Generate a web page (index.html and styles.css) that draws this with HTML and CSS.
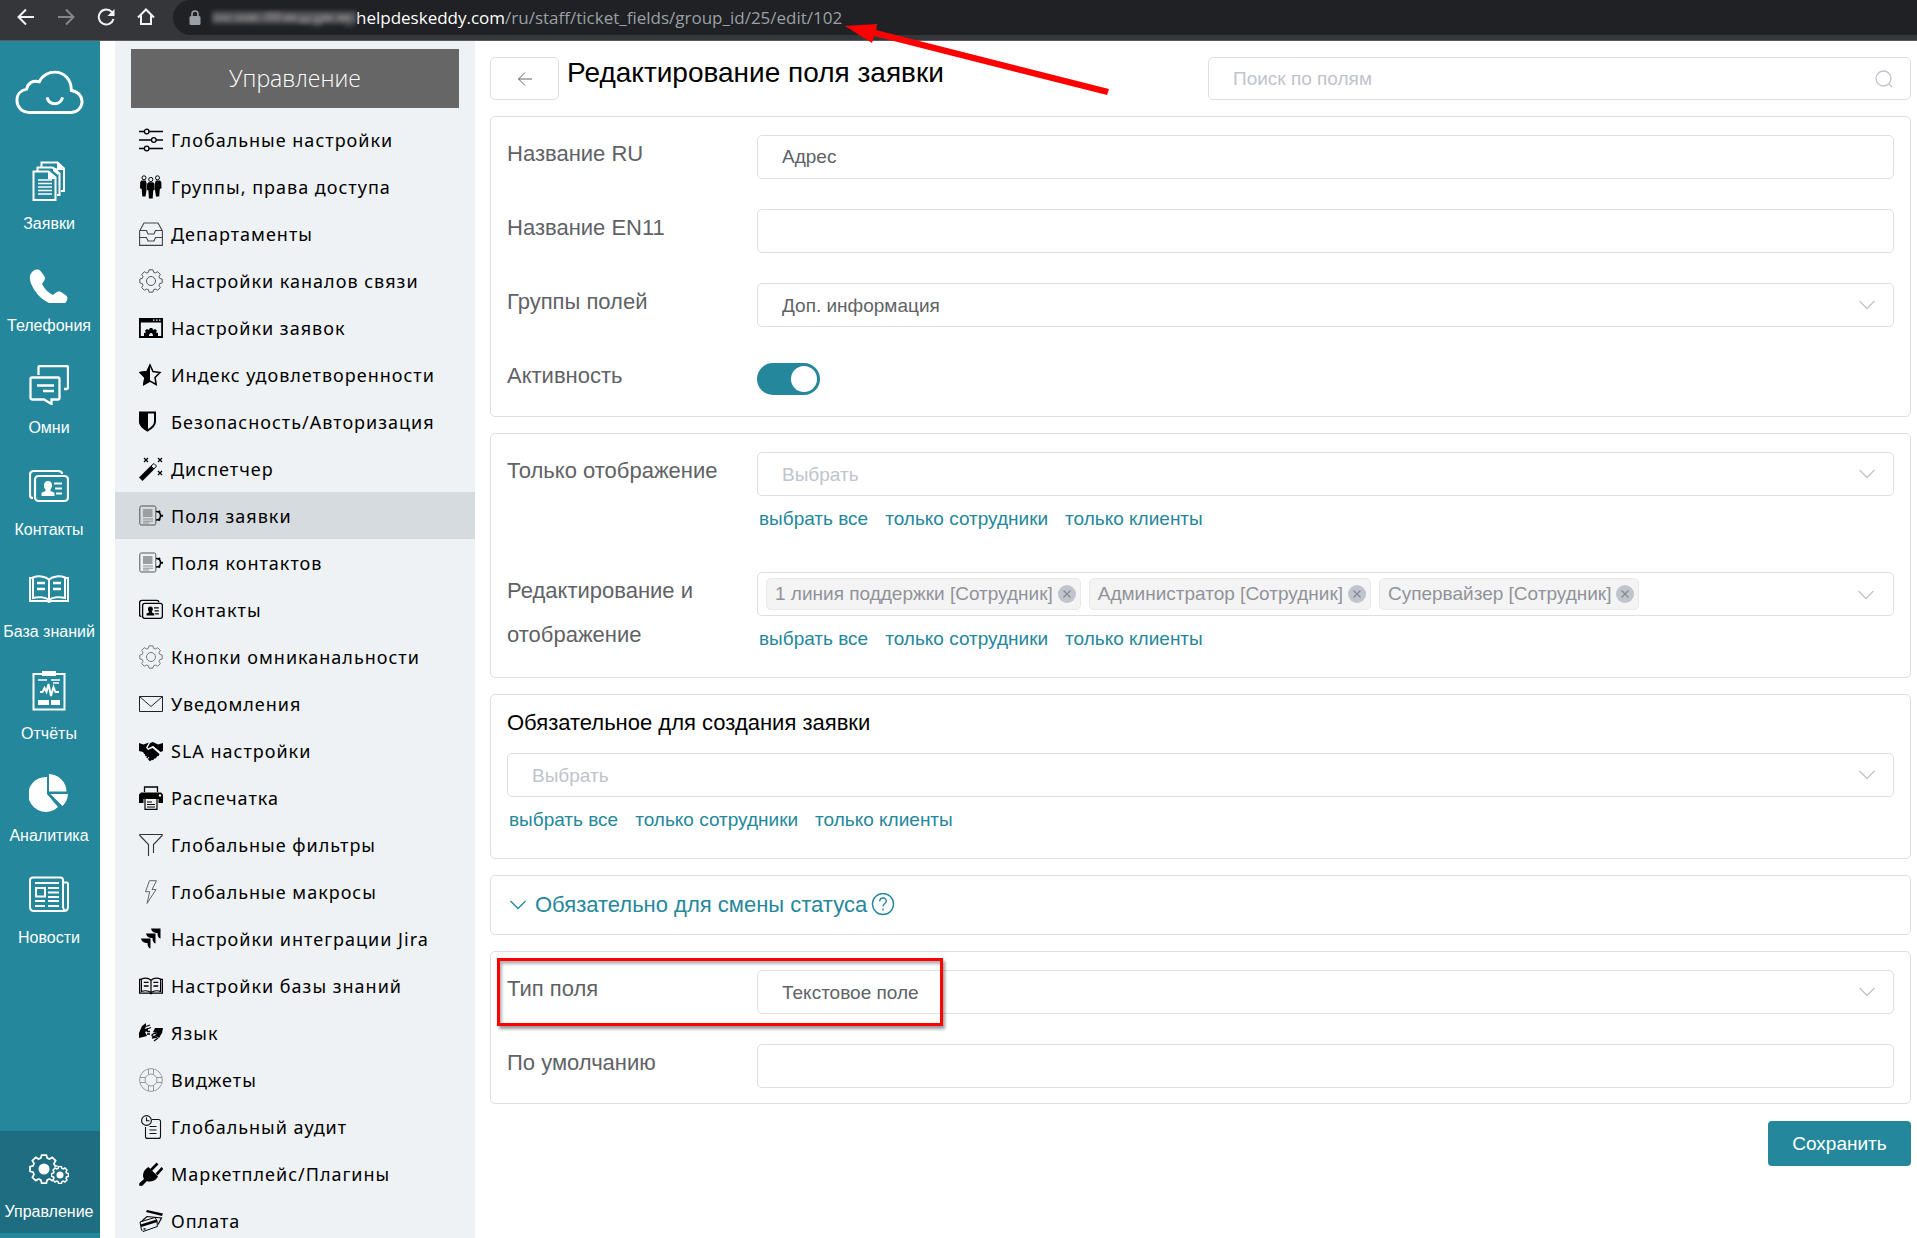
FILE: index.html
```html
<!DOCTYPE html>
<html lang="ru">
<head>
<meta charset="utf-8">
<title>Редактирование поля заявки</title>
<link rel="stylesheet" href="styles.css">
</head>
<body>
<svg class="defs" aria-hidden="true">
  <symbol id="gear" viewBox="0 0 24 24"><path d="M9.4 3.3 10.1.8h3.8l.7 2.5 1.7.7 2.3-1.3 2.7 2.7L20 7.7l.7 1.7 2.5.7v3.8l-2.5.7-.7 1.7 1.3 2.3-2.7 2.7-2.3-1.3-1.7.7-.7 2.5h-3.8l-.7-2.5-1.7-.7-2.3 1.3-2.7-2.7L4 16.3l-.7-1.7-2.5-.7v-3.8l2.5-.7L4 7.7 2.7 5.4l2.7-2.7L7.7 4Z"/></symbol>
  <symbol id="chevron" viewBox="0 0 18 18"><path d="M1.500 5 9 12.500l7.500-7.500" fill="none" stroke="currentColor" stroke-width="1.300"/></symbol>
  <symbol id="cross" viewBox="0 0 18 18"><circle cx="9" cy="9" r="9" fill="#c0c4cc"/><path d="m5.500 5.500 7 7m0-7-7 7" stroke="#85888e" stroke-width="1.200"/></symbol>
  <symbol id="fields" viewBox="0 0 24 24"><rect x=".8" y="2" width="16" height="19" rx="1.500" fill="none" stroke="#555"/><path d="M4 5h9.500v8H4z" fill="#9b9fa2"/><path d="M4 15h10M4 17.200h10M4 19h6" stroke="#8b8f92"/><path d="M17 7.500c3 0 4.500 2 4.500 4.200S20 16 17 16" fill="none" stroke="#000" stroke-width="1.500"/><path d="m19.500 7 1.500 1.500M22 11.700h2M19.500 16.600 21 15" stroke="#000" stroke-width="2"/></symbol>
  <symbol id="cards" viewBox="0 0 40 40"><g fill="none" stroke="currentColor" stroke-width="2.200"><path d="M4 31c-2 0-3-1-3-3V8c0-2.500 1-4 4-4h24c3 0 4 1.500 4 3"/><rect x="6" y="9" width="33" height="25" rx="3.500"/></g><path d="M19 14c3 0 4.300 2 4 5-.2 1.600-.8 2.600-1.500 3.500v1.500l4 1.700V29h-13v-3.300l4-1.700v-1.500C15.600 21.500 15 20.500 15 19c-.2-3 1-5 4-5Z" fill="currentColor"/><path d="M25 16.500h8M26 21.500h7M27 26.500h6" stroke="currentColor" stroke-width="2.200"/></symbol>
  <symbol id="book" viewBox="0 0 40 40"><g fill="none" stroke="currentColor" stroke-width="2"><path d="M4 9H1v23h17l2 1 2-1h17V9h-3"/><path d="M20 10.500C16 7 9 6.500 4 8.500V29c5-1.500 12-1 16 2 4-3 11-3.500 16-2V8.500c-5-2-12-1.500-16 2Zm0 0V31"/></g><path d="M8 14h8M8 20h8M24 14h8M24 20h8" stroke="currentColor" stroke-width="2.300"/></symbol>
</svg>

<header class="browser">
  <nav class="browser-nav" aria-label="Навигация браузера">
    <button class="nav-btn" aria-label="Назад"><svg viewBox="0 0 18 18"><path d="M17 9H2M9 1.500 1.500 9 9 16.500"/></svg></button>
    <button class="nav-btn nav-btn-off" aria-label="Вперёд"><svg viewBox="0 0 18 18"><path d="M1 9h15M9 1.500 16.500 9 9 16.500"/></svg></button>
    <button class="nav-btn" aria-label="Обновить"><svg viewBox="0 0 18 18"><path d="M15 4.200A7.500 7.500 0 1 0 16.500 11"/><path class="fill" d="M17.500 1v7h-7z"/></svg></button>
    <button class="nav-btn" aria-label="Домой"><svg viewBox="0 0 18 18"><path d="m1 9.500 8-8 8 8M4 7.500V16h10V7.500"/></svg></button>
  </nav>
  <div class="address">
    <svg class="lock" viewBox="0 0 12 16"><rect x=".5" y="6" width="11" height="9" rx="1.500" fill="#9aa0a6"/><path d="M3 6V4a3 3 0 0 1 6 0v2" fill="none" stroke="#9aa0a6" stroke-width="1.600"/></svg>
    <svg class="masked" viewBox="0 0 144 18" preserveAspectRatio="none" aria-hidden="true">
      <path fill="#4c4d51" d="M0 2h144v13H0z"/><path fill="#5c5d61" d="M0 6h144v6H0z"/><path fill="#6f6f72" d="M3 6h15v6H3zM24 6h12v6H24zM102 6h9v9h-9z"/><path fill="#777678" d="M36 6h9v6h-9zM72 6h12v6H72zM111 6h9v6h-9zM126 6h12v6h-12z"/><path fill="#6d6c70" d="M54 3h15v9H54zM87 7h12v8H87z"/><path fill="#3c3d41" d="M100 15h9v3h-9zM132 15h9v3h-9z"/>
    </svg>
    <span class="url"><span class="host">helpdeskeddy.com</span>/ru/staff/ticket_fields/group_id/25/edit/102</span>
  </div>
</header>

<div class="app">
  <nav class="rail" aria-label="Разделы">
    <a class="logo" href="#" aria-label="Главная"><svg viewBox="0 0 71 46"><path d="M15 43.500C6 43.500 2 37 2 31S6 20.500 12 19.500C13 13 19 10 25 12 28 5 35 2 41 2c10 0 17 8 17 19 7 1 11 6 11 11.500 0 6-5 11-11 11ZM33 28c1 5 5 6.500 8 6.500s6.500-1.500 8-6.500"/></svg></a>
    <a class="rail-item" href="#"><svg viewBox="0 0 40 40"><g fill="none" stroke="currentColor" stroke-width="2"><path d="M4.500 10.500h15l7 6V39h-22z"/><path d="M8.500 10V6.500h15l7 6V34H28M12.500 6V1.500h16l6.500 6V30h-3"/></g><path d="M19 10v8h8zM24 6v4l5 4V8zM28 1v8h7z" fill="currentColor"/><path d="M9 19h14M9 22.500h14M9 26h14M9 29.500h14M9 33h14" stroke="currentColor" stroke-width="1.600"/></svg>Заявки</a>
    <a class="rail-item" href="#"><svg viewBox="0 -5 40 40"><path fill="currentColor" d="M3.500 3.500C6 1 10 .5 12 3.500l3.500 5c1.500 3-1 5-2.500 7.500 2.500 5 6 8.500 11 11 2.500-2 4.500-4.500 8-3l4.500 3c3 2 2 5.500-.5 8.500-4 3.500-10 2.500-16-.5C11.500 31 5.500 24 2 15.500c-1.500-4.500-2-8.500 1.500-12Z"/></svg>Телефония</a>
    <a class="rail-item" href="#"><svg viewBox="0 0 40 40"><path d="M9.500 10V2.500A1.500 1.500 0 0 1 11 1h26.500A1.500 1.500 0 0 1 39 2.500v20a1.500 1.500 0 0 1-1.500 1.500H35M3 12.500h26A1.500 1.500 0 0 1 30.500 14v19a1.500 1.500 0 0 1-1.500 1.500h-6.500V39L15 34.500H3A1.500 1.500 0 0 1 1.500 33V14A1.500 1.500 0 0 1 3 12.500ZM8 20.500h17M14 26h11" fill="none" stroke="currentColor" stroke-width="2.300"/></svg>Омни</a>
    <a class="rail-item" href="#"><svg><use href="#cards"/></svg>Контакты</a>
    <a class="rail-item" href="#"><svg><use href="#book"/></svg>База знаний</a>
    <a class="rail-item" href="#"><svg viewBox="0 0 40 40"><path d="M4.500 3h31v35.500h-31zM11 21h2.500l2-4 2 4 2-8 2.500 12 2.500-9 2 5H30" fill="none" stroke="currentColor" stroke-width="2"/><path d="M13 0h14v5H13zM9 29h11v5H9zM22 29h9v5h-9z" fill="currentColor"/><path d="M9 9h9M22 9h9M24 12h6" stroke="currentColor" stroke-width="1.300"/></svg>Отчёты</a>
    <a class="rail-item" href="#"><svg viewBox="0 0 40 40"><path fill="currentColor" d="M18 4v17l11 13A17.500 17.500 0 1 1 18 4Zm2-3a18 18 0 0 1 17.500 17.500H20Zm1.500 20H39c-.3 5-2.200 9-5.500 12Z"/></svg>Аналитика</a>
    <a class="rail-item" href="#"><svg viewBox="0 0 40 40"><path d="M34 33V5c0-1.500-1-2.500-2.500-2.500H4C2 2.500 1 3.500 1 5v27c0 2.500 1.500 4 4 4h30c3 0 4-1.500 4-4V9c0-1-.5-1.500-1.500-1.500H34M34 31c0 3 1.500 5 3 4M7 13h9v8.500H7z" fill="none" stroke="currentColor" stroke-width="2"/><path d="M6 8h24M19 13h11M19 17.500h11M19 22h11M6 26h10M19 26h11M6 31h10M19 31h11" stroke="currentColor" stroke-width="2"/></svg>Новости</a>
    <a class="rail-item rail-item-active" href="#"><svg viewBox="0 0 40 40"><g fill="none" stroke="currentColor"><use href="#gear" x="0" y="5" width="30" height="30" stroke-width="1.400"/><circle cx="31" cy="26" r="9" fill="#1f6d80" stroke="none"/><use href="#gear" x="22" y="17" width="18" height="18" stroke-width="2"/></g><circle cx="15" cy="20" r="5.500" fill="currentColor"/><circle cx="31" cy="26" r="3.500" fill="currentColor"/></svg>Управление</a>
  </nav>

  <aside class="sidebar">
    <h2 class="sidebar-title">Управление</h2>
    <nav class="menu" aria-label="Управление">
      <a href="#"><svg viewBox="0 0 24 24"><g fill="none" stroke="#000" stroke-width="1.300"><path d="M0 3.500h5.500M10 3.500h14M0 12h12.500M17 12h7M0 20.500h5.500M10 20.500h14"/><circle cx="7.700" cy="3.500" r="2.300"/><circle cx="14.800" cy="12" r="2.300"/><circle cx="7.700" cy="20.500" r="2.300"/></g></svg>Глобальные настройки</a>
      <a href="#"><svg viewBox="0 0 24 24"><circle cx="5" cy="2.800" r="2" fill="#eef2f5" stroke="#000"/><circle cx="18.500" cy="2.800" r="2" fill="#eef2f5" stroke="#000"/><path d="M2.500 5.500h4.200L7.500 8v7l-1 6.500H3.300L2.700 14 1 13.200 1.200 7zM16.800 5.500H21L22.300 7l.2 6.200-1.700.8-.6 7.500H17L16 15V8z"/><circle cx="11.800" cy="4.500" r="2.100" fill="#eef2f5" stroke="#000"/><path d="M9.500 7.300h4.600l1.400 1.500.2 6-1.500.8-.5 7.900H9.900l-.5-7.900-1.500-.8.200-6z"/></svg>Группы, права доступа</a>
      <a href="#"><svg viewBox="0 0 24 24"><g fill="none" stroke="#444" stroke-width="1.100"><path d="m.6 9 4.400-8h14l4.400 8v14.400H.6zM.6 8.500h6.900l1.500 3.500h6l1.500-3.500h6.900M.6 15.500h6.900L9 19h6l1.500-3.500h6.900"/></g></svg>Департаменты</a>
      <a href="#"><svg viewBox="0 0 24 24" fill="none" stroke="#555" stroke-width="1"><use href="#gear"/><circle cx="12" cy="12" r="4.500"/></svg>Настройки каналов связи</a>
      <a href="#"><svg viewBox="0 0 24 24"><path fill-rule="evenodd" d="M0 2h24v20H0zm1.800 4.500V20h20.400V6.500zM14 3.500v1.300h1.500V3.500zm3 0v1.300h1.500V3.500zm3 0v1.300h1.500V3.500z"/><path d="M5 20v-3l2-.5-1-2 2-1.500 2 1 .8-2h2.500l.7 2 2-1 2 1.500-1 2 2 .5v3h-5c0-4-4-4-4 0z"/></svg>Настройки заявок</a>
      <a href="#"><svg viewBox="0 0 24 24"><path d="m11 2 3 6.500 7 1-5 5 1.200 7L11 18.200 4.800 21.500l1.200-7-5-5 7-1z" fill="none" stroke="#000" stroke-width="1.500"/><path d="M11 1v17.500L4 22l1.400-7.300L0 9l7.600-1z"/></svg>Индекс удовлетворенности</a>
      <a href="#"><svg viewBox="0 0 24 24"><path d="M1 2.500h15v9c0 4-4 7-7.500 9-3.500-2-7.500-5-7.500-9z" fill="none" stroke="#000" stroke-width="2"/><path d="M0 2h9v19.500C5 19.500 0 16 0 11z"/></svg>Безопасность/Авторизация</a>
      <a href="#"><svg viewBox="0 0 24 24"><path d="M0 20.500 11.500 9l3.500 3.500L3.500 24z"/><path d="m12 9 3-2.500L17.500 9 15 12z" fill="none" stroke="#000"/><path d="m5 1 4 4m0-4L5 5m14-4 4 4m0-4-4 4m0 9 4 4m0-4-4 4" stroke="#000" stroke-width="1.200"/></svg>Диспетчер</a>
      <a class="active" href="#"><svg><use href="#fields"/></svg>Поля заявки</a>
      <a href="#"><svg><use href="#fields"/></svg>Поля контактов</a>
      <a href="#"><svg><use href="#cards"/></svg>Контакты</a>
      <a href="#"><svg viewBox="0 0 24 24" fill="none" stroke="#777" stroke-width="1"><use href="#gear"/><circle cx="12" cy="12" r="4.500"/></svg>Кнопки омниканальности</a>
      <a href="#"><svg viewBox="0 0 24 24"><path d="M.5 4.500h23v15H.5zl11.500 10 11.500-10" fill="none" stroke="#222"/></svg>Уведомления</a>
      <a href="#"><svg viewBox="0 0 24 24"><path d="m0 4 4.500 1.500L10 3.500l-3 5 2 2.500 4.500-2 7 6-1 2-1.500.2-1 2-1.700.2-1 1.600-2 .2-1.500 1L7 18l-3-5-4-1z"/><path d="m24 4-5 1.500-5-2.500-3 1-2.500 4.500.8 1L14 7l7.500 6 2.500-1z"/><path d="M10.500 4 8 8.500l1 1.500 5-2.500 6.500 5.500M6 19l1.500-2M8.500 20l1.500-2M4.500 17l1.500-2" fill="none" stroke="#eef2f5"/></svg>SLA настройки</a>
      <a href="#"><svg viewBox="0 0 24 24"><path d="M5.500 6V1h13v5" fill="none" stroke="#000" stroke-width="1.300"/><path d="M2 6.500h20l2 2V17h-4.500v-4h-15v4H0V8.500z"/><path d="M6 13v10.300h12V13M8 16h5M8 18.500h8M8 21h8" fill="none" stroke="#000" stroke-width="1.200"/><circle cx="21" cy="9.500" r="1.200" fill="#fff"/></svg>Распечатка</a>
      <a href="#"><svg viewBox="0 0 24 24"><path d="M9.500 23V11.500L.8 2.500V1.500h22.400v1l-8.700 9V20" fill="none" stroke="#333" stroke-width="1.100"/></svg>Глобальные фильтры</a>
      <a href="#"><svg viewBox="0 0 24 24"><path d="m10.500.7-4 11h4.200L8 23.500 17 9.500h-4L17.500.7z" fill="none" stroke="#666"/></svg>Глобальные макросы</a>
      <a href="#"><svg viewBox="0 0 24 24"><path d="M12 1.500h9.500v10c-2-.6-3-2-3-5.500-3.500 0-5.500-1-6.500-4.500ZM7 6.500h9.500v10c-2-.6-3-2-3-5.500-3.500 0-5.500-1-6.500-4.500ZM2 11.500h9.500v10c-2-.6-3-2-3-5.500-3.500 0-5.500-1-6.500-4.500Z"/></svg>Настройки интеграции Jira</a>
      <a href="#"><svg><use href="#book"/></svg>Настройки базы знаний</a>
      <a href="#"><svg viewBox="0 0 24 24"><path d="M0 12 3 5l4-3v3l-1 3 3-1v3l-3 1 2 4-4 1-4 1zM24 7l-1 5-3 5-3-2 1-3-4-1 2-4z"/><path d="M7 5.500 11 4M8 8l4-1.500M8 10.500h3M8 13h3M14 13c3-2 5 1 2 2s-4-1-2-2ZM13 17l5-1M15 20l4-3" fill="none" stroke="#000" stroke-width="1.300"/></svg>Язык</a>
      <a href="#"><svg viewBox="0 0 24 24" fill="none" stroke="#999"><circle cx="12" cy="12" r="11.400"/><circle cx="12" cy="12" r="6"/><path d="M9.500 1v6M14.500 1v6M9.500 17v6M14.500 17v6M1 9.500h6M1 14.500h6M17 9.500h6M17 14.500h6"/></svg>Виджеты</a>
      <a href="#"><svg viewBox="0 0 24 24" fill="none" stroke="#111" stroke-width="1.100"><circle cx="7.500" cy="5.500" r="4.900"/><path d="M7.500 2.500v3.300h3M13 4.500h6.500a2 2 0 0 1 2 2v14.900a2 2 0 0 1-2 2h-11a2 2 0 0 1-2-2V12M10.500 11.500h7M10.500 15h7M10.500 18.500h7"/></svg>Глобальный аудит</a>
      <a href="#"><svg viewBox="0 0 24 24"><path d="m8 6 1.500-1L19 14.500l-1 1.500c-3 4-8 4-10 3l-5 5-3-.5.500-2.500 4.500-4c-2-3-1-8 3-11Z"/><path d="m12 8 6.500-6.500M17.500 12.500 23.500 6" stroke="#000" stroke-width="2.600"/></svg>Маркетплейс/Плагины</a>
      <a href="#"><svg viewBox="0 0 24 24"><path d="m1 13 15-4.500 2 3 .3 6L4 22.500 2.500 21z" fill="#eef2f5" stroke="#000"/><path d="m1.500 15.500 16-5 .8 2.500-16 5zM7 3l1-2 16 3.500-1 2.500z"/><path d="m3 12 5-4.500L22.500 9 19 15.500" fill="none" stroke="#000" stroke-width="1.200"/><path d="m4.500 20.200 2-.6" stroke="#000" stroke-width="1.500"/></svg>Оплата</a>
    </nav>
  </aside>

  <main class="content">
    <div class="page-head">
      <button class="back" aria-label="Назад"><svg viewBox="0 0 16 16"><path d="M15 8H1.500M8 1.500 1.500 8 8 14.500"/></svg></button>
      <h1>Редактирование поля заявки</h1>
      <div class="search">
        <input class="box" type="text" placeholder="Поиск по полям" aria-label="Поиск по полям">
        <svg class="box-icon" viewBox="0 0 18 18"><circle cx="8.500" cy="8.500" r="7.500" fill="none" stroke="currentColor" stroke-width="1.300"/><path d="m14 14 3 3" stroke="currentColor" stroke-width="1.300"/></svg>
      </div>
    </div>

    <section class="panel">
      <div class="row"><label for="name-ru">Название RU</label><div class="control"><input class="box" id="name-ru" type="text" value="Адрес"></div></div>
      <div class="row"><label for="name-en">Название EN11</label><div class="control"><input class="box" id="name-en" type="text"></div></div>
      <div class="row"><label for="groups">Группы полей</label><div class="control"><div class="select"><select class="box" id="groups"><option>Доп. информация</option></select><svg class="box-icon"><use href="#chevron"/></svg></div></div></div>
      <div class="row"><label for="active">Активность</label><div class="control"><input class="toggle" id="active" type="checkbox" role="switch" checked></div></div>
    </section>

    <section class="panel">
      <div class="row"><label for="view-only">Только отображение</label><div class="control"><div class="select"><select class="box placeholder" id="view-only"><option>Выбрать</option></select><svg class="box-icon"><use href="#chevron"/></svg></div>
        <div class="quick"><a href="#">выбрать все</a><a href="#">только сотрудники</a><a href="#">только клиенты</a></div></div></div>
      <div class="row"><span class="label" id="edit-label">Редактирование и отображение</span><div class="control"><div class="select box tags" role="group" aria-labelledby="edit-label">
          <span class="tag">1 линия поддержки [Сотрудник]<button aria-label="Убрать"><svg><use href="#cross"/></svg></button></span>
          <span class="tag">Администратор [Сотрудник]<button aria-label="Убрать"><svg><use href="#cross"/></svg></button></span>
          <span class="tag">Супервайзер [Сотрудник]<button aria-label="Убрать"><svg><use href="#cross"/></svg></button></span>
          <svg class="box-icon"><use href="#chevron"/></svg></div>
        <div class="quick"><a href="#">выбрать все</a><a href="#">только сотрудники</a><a href="#">только клиенты</a></div></div></div>
    </section>

    <section class="panel panel-stacked">
      <label class="panel-title" for="required">Обязательное для создания заявки</label>
      <div class="select"><select class="box placeholder" id="required"><option>Выбрать</option></select><svg class="box-icon"><use href="#chevron"/></svg></div>
      <div class="quick"><a href="#">выбрать все</a><a href="#">только сотрудники</a><a href="#">только клиенты</a></div>
    </section>

    <section class="panel">
      <button class="expander"><svg class="expander-arrow"><use href="#chevron"/></svg>Обязательно для смены статуса<svg class="help" viewBox="0 1 24 24" fill="none" stroke="currentColor" stroke-width="1.400"><circle cx="12" cy="12" r="10.500"/><path d="M8.700 9.500c0-4.500 6.600-4.500 6.600-.5 0 2.500-3.300 2.500-3.300 5.500M12 16.500v2"/></svg></button>
    </section>

    <section class="panel">
      <div class="row"><label for="type">Тип поля</label><div class="control"><div class="select"><select class="box" id="type"><option>Текстовое поле</option></select><svg class="box-icon"><use href="#chevron"/></svg></div></div></div>
      <div class="row"><label for="default">По умолчанию</label><div class="control"><input class="box" id="default" type="text"></div></div>
      <div class="highlight"></div>
    </section>

    <button class="save">Сохранить</button>
  </main>
</div>
<svg class="pointer" viewBox="0 0 264 72" aria-hidden="true"><path fill="#f00" d="m0 3 32-2-1 6 233 59-2 6L29 13l-2 7Z"/></svg>
</body>
</html>
```

FILE: styles.css
```css
* { box-sizing: border-box; }

:root {
  --teal: #24879b;
  --teal-dark: #1f6d80;
  --line: #dcdfe6;
  --text: #606266;
  --muted: #c0c4cc;
  --side: #eef2f5;
}

body {
  margin: 0;
  height: 100vh;
  display: flex;
  flex-direction: column;
  position: relative;
  overflow: hidden;
  background: #fff;
  font-family: "Liberation Sans", Arial, sans-serif;
  font-size: 19px;
  color: #000;
}

button, input, select { font: inherit; }
button { cursor: pointer; }
a { text-decoration: none; }
.defs { display: none; }

/* Browser toolbar */
.browser {
  flex: none;
  height: 41px;
  display: flex;
  background: #35363a;
  border-bottom: 1px solid #5b5b5c;
}
.browser-nav {
  display: flex;
  align-items: center;
  gap: 22px;
  padding: 0 18px 6px 17px;
}
.nav-btn {
  width: 18px;
  height: 18px;
  padding: 0;
  border: 0;
  background: none;
  color: #f1f3f4;
}
.nav-btn-off { color: #85868a; }
.nav-btn svg {
  display: block;
  width: 18px;
  height: 18px;
  fill: none;
  stroke: currentColor;
  stroke-width: 2;
}
.nav-btn .fill { fill: currentColor; stroke: none; }
.address {
  flex: 1;
  height: 35px;
  display: flex;
  align-items: center;
  padding-left: 16px;
  background: #202124;
  border-radius: 18px 0 0 18px;
}
.lock { width: 12px; height: 16px; margin-right: 11px; }
.masked { width: 144px; height: 18px; filter: blur(2px); }
.url {
  font-family: "Open Sans", "Noto Sans", sans-serif;
  font-size: 17px;
  color: #9aa0a6;
}
.host { color: #fff; }

.app { flex: 1; min-height: 0; display: flex; }

/* Section rail */
.rail {
  flex: none;
  width: 100px;
  display: flex;
  flex-direction: column;
  padding-bottom: 5px;
  background: var(--teal);
  overflow: hidden;
}
.logo { height: 102px; flex: none; padding: 29px 0 0 15px; }
.logo svg {
  display: block;
  width: 69px;
  height: 45px;
  fill: none;
  stroke: #fff;
  stroke-width: 3;
}
.rail-item {
  flex: none;
  height: 102px;
  padding: 18px 2px 0 0;
  text-align: center;
  white-space: nowrap;
  font-size: 16px;
  line-height: 20px;
  color: #fff;
}
.rail-item svg { display: block; width: 40px; height: 40px; margin: 0 auto 13px; }
.rail-item-active { margin-top: auto; background: var(--teal-dark); }

/* Settings menu */
.sidebar {
  flex: none;
  width: 360px;
  margin-left: 15px;
  padding-top: 8px;
  background: var(--side);
  overflow: hidden;
}
.sidebar-title {
  margin: 0 16px 8px;
  background: #666;
  color: #fff;
  text-align: center;
  font: 300 23px/59px "Open Sans", "Noto Sans", sans-serif;
}
.menu a {
  display: flex;
  align-items: center;
  gap: 8px;
  height: 47px;
  padding-left: 24px;
  font-family: "Noto Sans", sans-serif;
  font-size: 18px;
  letter-spacing: 1px;
  white-space: nowrap;
  color: #000;
}
.menu a.active { background: #d6dbdf; }
.menu svg { flex: none; width: 24px; height: 24px; }

/* Form */
.content {
  flex: 1;
  min-width: 0;
  padding: 16px 6px 0 15px;
  display: flex;
  flex-direction: column;
  gap: 16px;
}
.page-head { height: 43px; display: flex; align-items: stretch; }
.back {
  width: 69px;
  padding: 0;
  background: #fff;
  border: 1px solid var(--line);
  border-radius: 5px;
}
.back svg {
  display: block;
  width: 16px;
  height: 16px;
  margin: 0 auto;
  fill: none;
  stroke: var(--text);
  stroke-width: 1;
}
h1 {
  flex: 1;
  margin: 0 0 0 8px;
  font-weight: 400;
  font-size: 28px;
  line-height: 32px;
}
.search { position: relative; width: 703px; }
.search .box { height: 100%; }
.box {
  display: block;
  width: 100%;
  height: 44px;
  padding: 0 24px;
  background: #fff;
  border: 1px solid var(--line);
  border-radius: 5px;
  color: var(--text);
  appearance: none;
}
.box::placeholder, .placeholder { color: var(--muted); opacity: 1; }
.box-icon {
  position: absolute;
  top: 13px;
  right: 18px;
  width: 18px;
  height: 18px;
  color: var(--muted);
  pointer-events: none;
}
.select { position: relative; }

.panel {
  position: relative;
  display: flex;
  flex-direction: column;
  gap: 27px;
  padding: 15px 16px;
  border: 1px solid var(--line);
  border-radius: 5px;
}
.row { display: grid; grid-template-columns: 250px 1fr; }
.row > label, .label {
  font-size: 22px;
  line-height: 44px;
  color: var(--text);
}
.control { min-height: 47px; padding-top: 3px; }
.toggle {
  display: block;
  position: relative;
  width: 63px;
  height: 32px;
  margin: 6px 0 0;
  appearance: none;
  border-radius: 16px;
  background: var(--teal);
}
.toggle::before {
  content: "";
  position: absolute;
  top: 3px;
  right: 3px;
  width: 26px;
  height: 26px;
  border-radius: 50%;
  background: #fff;
}
.quick { display: flex; gap: 17px; padding-left: 2px; line-height: 46px; }
.quick a, .expander { color: var(--teal); }
.tags { display: flex; align-items: center; gap: 8px; padding: 0 8px; }
.tag {
  display: flex;
  align-items: center;
  gap: 5px;
  height: 32px;
  padding: 0 4px 0 8px;
  background: #f4f4f5;
  border: 1px solid #e9e9eb;
  border-radius: 5px;
  color: #909399;
}
.tag button { padding: 0; border: 0; background: none; }
.tag svg { display: block; width: 18px; height: 18px; }
.panel-stacked { gap: 0; }
.panel-title {
  margin-bottom: 17px;
  font-size: 22px;
  line-height: 26px;
}
.expander {
  display: flex;
  align-items: center;
  align-self: flex-start;
  height: 28px;
  padding: 0 2px;
  border: 0;
  background: none;
  font-size: 22px;
}
.expander-arrow { width: 18px; height: 18px; margin-right: 8px; }
.help { width: 24px; height: 24px; margin-left: 4px; }
.save {
  align-self: flex-end;
  width: 143px;
  height: 45px;
  margin-top: 1px;
  border: 0;
  border-radius: 4px;
  background: var(--teal);
  color: #fff;
}

/* Annotations over the page */
.highlight {
  position: absolute;
  top: 6px;
  left: 6px;
  width: 446px;
  height: 68px;
  border: 3px solid #f00;
  box-shadow: 2px 3px 3px rgba(0, 0, 0, .4), inset 2px 3px 3px rgba(0, 0, 0, .3);
}
.pointer {
  position: absolute;
  top: 23px;
  left: 845px;
  width: 264px;
  height: 72px;
  overflow: visible;
}
```
